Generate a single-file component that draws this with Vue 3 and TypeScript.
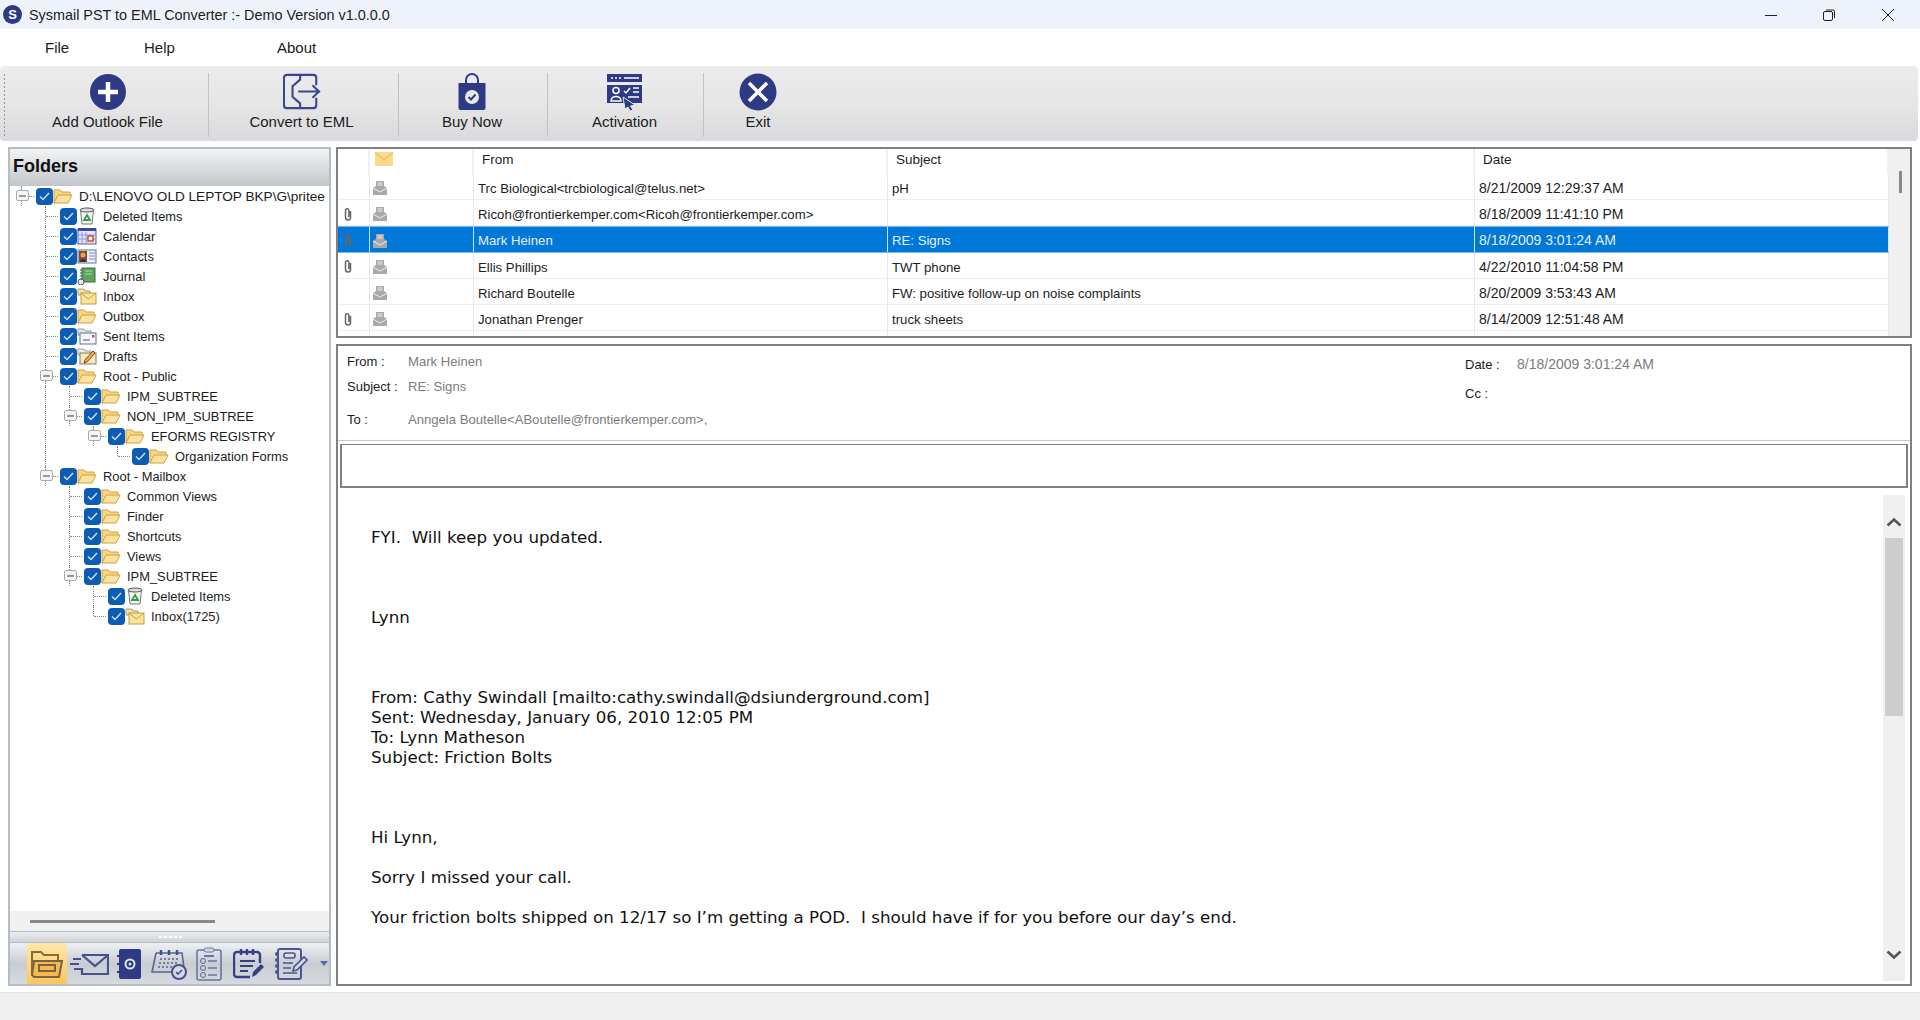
<script setup lang="ts">
interface FolderRow {
  guides: string
  icon: string
  label: string
}

interface MailRow {
  clip: boolean
  from: string
  subject: string
  date: string
  selected?: boolean
}

// guide chars: ' ' blank, '|' pipe, 'T' tee, 'L' elbow, '+' expander
const folders: FolderRow[] = [
  { guides: '+', icon: 'folder', label: 'D:\\LENOVO OLD LEPTOP BKP\\G\\pritee' },
  { guides: ' T', icon: 'trash', label: 'Deleted Items' },
  { guides: ' T', icon: 'calendar', label: 'Calendar' },
  { guides: ' T', icon: 'contacts', label: 'Contacts' },
  { guides: ' T', icon: 'journal', label: 'Journal' },
  { guides: ' T', icon: 'inbox', label: 'Inbox' },
  { guides: ' T', icon: 'folder', label: 'Outbox' },
  { guides: ' T', icon: 'sent', label: 'Sent Items' },
  { guides: ' T', icon: 'drafts', label: 'Drafts' },
  { guides: ' +', icon: 'folder', label: 'Root - Public' },
  { guides: ' |T', icon: 'folder', label: 'IPM_SUBTREE' },
  { guides: ' |+', icon: 'folder', label: 'NON_IPM_SUBTREE' },
  { guides: ' | +', icon: 'folder', label: 'EFORMS REGISTRY' },
  { guides: ' |  L', icon: 'folder', label: 'Organization Forms' },
  { guides: ' +', icon: 'folder', label: 'Root - Mailbox' },
  { guides: '  T', icon: 'folder', label: 'Common Views' },
  { guides: '  T', icon: 'folder', label: 'Finder' },
  { guides: '  T', icon: 'folder', label: 'Shortcuts' },
  { guides: '  T', icon: 'folder', label: 'Views' },
  { guides: '  +', icon: 'folder', label: 'IPM_SUBTREE' },
  { guides: '   T', icon: 'trash', label: 'Deleted Items' },
  { guides: '   L', icon: 'inbox', label: 'Inbox(1725)' },
]

const mails: MailRow[] = [
  { clip: false, from: 'Trc Biological<trcbiological@telus.net>', subject: 'pH', date: '8/21/2009 12:29:37 AM' },
  { clip: true, from: 'Ricoh@frontierkemper.com<Ricoh@frontierkemper.com>', subject: '', date: '8/18/2009 11:41:10 PM' },
  { clip: true, from: 'Mark Heinen', subject: 'RE: Signs', date: '8/18/2009 3:01:24 AM', selected: true },
  { clip: true, from: 'Ellis Phillips', subject: 'TWT phone', date: '4/22/2010 11:04:58 PM' },
  { clip: false, from: 'Richard Boutelle', subject: 'FW: positive follow-up on noise complaints', date: '8/20/2009 3:53:43 AM' },
  { clip: true, from: 'Jonathan Prenger', subject: 'truck sheets', date: '8/14/2009 12:51:48 AM' },
]

const tools = [
  { label: 'Add Outlook File', icon: 'add', cls: 'tool-add' },
  { label: 'Convert to EML', icon: 'convert', cls: 'tool-convert' },
  { label: 'Buy Now', icon: 'buy', cls: 'tool-buy' },
  { label: 'Activation', icon: 'activate', cls: 'tool-activate' },
  { label: 'Exit', icon: 'exit', cls: 'tool-exit' },
]

const navIcons = ['nav-mail', 'nav-contact', 'nav-cal', 'nav-task', 'nav-note', 'nav-journal']

const bodyText = `FYI.  Will keep you updated.



Lynn



From: Cathy Swindall [mailto:cathy.swindall@dsiunderground.com]
Sent: Wednesday, January 06, 2010 12:05 PM
To: Lynn Matheson
Subject: Friction Bolts



Hi Lynn,

Sorry I missed your call.

Your friction bolts shipped on 12/17 so I’m getting a POD.  I should have if for you before our day’s end.`

const guideClass = (ch: string) => {
  if (ch === '|') return 'g-pipe'
  if (ch === 'T') return 'g-tee'
  if (ch === 'L') return 'g-elbow'
  if (ch === '+') return 'g-exp'
  return ''
}
</script>

<template>
  <div class="app">
    <svg class="sprite" width="0" height="0" aria-hidden="true">
      <symbol id="folder" viewBox="0 0 20 18">
        <path d="M1 3 h6 l2 2 h8 v4 H5 L1 16z" fill="#fbd77e" stroke="#cf9f45" />
        <path d="M5 8 h14 l-4 8 H1z" fill="#fde3a0" stroke="#cf9f45" />
      </symbol>
      <symbol id="trash" viewBox="0 0 20 18">
        <path d="M3.500 3 h13 l-1.500 14 h-10z" fill="#f5f5f5" stroke="#777" />
        <ellipse cx="10" cy="3" rx="7" ry="2" fill="#ddd" stroke="#555" />
        <path d="M10 8 l3 5 h-6z" fill="none" stroke="#2f9e44" stroke-width="1.800" />
      </symbol>
      <symbol id="calendar" viewBox="0 0 20 18">
        <rect x="1" y="2" width="18" height="15" fill="#dfe6fa" stroke="#4a5aa8" />
        <rect x="1" y="1" width="18" height="3" fill="#3a4a9c" />
        <path d="M5 5 v11 M9 5 v11 M1 8 h18 M1 12 h18" stroke="#8d9bd8" />
        <rect x="11" y="9" width="5" height="5" fill="#fff" stroke="#d9482b" stroke-width="1.500" />
      </symbol>
      <symbol id="contacts" viewBox="0 0 20 18">
        <rect x="1" y="3" width="18" height="13" fill="#eef1f8" stroke="#6270a8" />
        <rect x="2" y="4" width="8" height="11" fill="#8a4a20" />
        <circle cx="6" cy="8" r="2.500" fill="#e8a060" />
        <path d="M3 15 c0-4 6-4 6 0z" fill="#333" />
        <path d="M12 6 h6 M12 9 h6 M12 12 h6" stroke="#7a8ac0" stroke-width="1.200" />
      </symbol>
      <symbol id="journal" viewBox="0 0 20 18">
        <rect x="5" y="1" width="13" height="14" fill="#5ea35e" stroke="#33703a" />
        <path d="M8 4 h7 M8 7 h7" stroke="#a9d8a9" />
        <path d="M5 3 h-2 M5 6 h-2 M5 9 h-2 M5 12 h-2" stroke="#444" />
        <circle cx="4" cy="15" r="3" fill="#e4e8ef" stroke="#555" />
      </symbol>
      <symbol id="inbox" viewBox="0 0 20 18">
        <path d="M1 2 h6 l1 2 h5 v4 H1z" fill="#f3e1ad" stroke="#b0a176" />
        <rect x="4" y="6" width="15" height="11" fill="#fbe39a" stroke="#bf9d4c" />
        <path d="M4 6 l7.500 6 l7.500-6" fill="none" stroke="#bf9d4c" />
      </symbol>
      <symbol id="sent" viewBox="0 0 20 18">
        <path d="M1 2 h6 l1 2 h6 v4 H1z" fill="#e8e8e8" stroke="#999" />
        <rect x="3" y="6" width="16" height="11" fill="#f6f8fd" stroke="#5f6f9c" />
        <path d="M6 13 h7" stroke="#7a88b4" stroke-width="1.500" />
        <rect x="15" y="8" width="2.500" height="2.500" fill="#d84a3a" />
      </symbol>
      <symbol id="drafts" viewBox="0 0 20 18">
        <path d="M1 2 h6 l1 2 h6 v4 H1z" fill="#eee" stroke="#a3a090" />
        <rect x="3" y="6" width="16" height="11" fill="#fbe9b8" stroke="#7a7a7a" />
        <path d="M7 16 l1-3 l8-9 l2 2 l-8 9z" fill="#d8c23e" stroke="#a52a2a" />
      </symbol>
      <symbol id="envelope" viewBox="0 0 16 15">
        <path d="M4 1 h8 v5 l3 2 v7 H1 V8 l3-2z" fill="#a9a9a9" />
        <path d="M5.500 3 h5 M5.500 5 h5" stroke="#eee" />
        <path d="M1 8 l7 4 l7-4" fill="none" stroke="#eee" />
      </symbol>
      <symbol id="clip" viewBox="0 0 10 14">
        <path d="M7.500 4 v6.500 a2.500 2.500 0 0 1-5 0 V3.500 a1.700 1.700 0 0 1 3.400 0 V10" fill="none" stroke="#666" stroke-width="1.500" />
      </symbol>
      <symbol id="add" viewBox="0 0 38 38">
        <circle cx="19" cy="19" r="18" fill="#2f3a85" />
        <path d="M19 9 v20 M9 19 h20" stroke="#fff" stroke-width="4.500" />
      </symbol>
      <symbol id="convert" viewBox="0 0 40 38">
        <path d="M18 1 H4 a3 3 0 0 0-3 3 V33 a3 3 0 0 0 3 3 H18 V31 L10 24 V13 L18 6z" fill="none" stroke="#3a4690" stroke-width="2.200" stroke-linejoin="round" />
        <path d="M18 1 H32 a3 3 0 0 1 3 3 V12 M35 25 V33 a3 3 0 0 1-3 3 H18" fill="none" stroke="#3a4690" stroke-width="2.200" />
        <path d="M16 18.500 H38 M31 12 L38 18.500 L31 25" fill="none" stroke="#3a4690" stroke-width="2.200" />
      </symbol>
      <symbol id="buy" viewBox="0 0 38 38">
        <path d="M13 12 V7 a6 6 0 0 1 12 0 V12" fill="none" stroke="#2f3a85" stroke-width="2" />
        <path d="M5.500 10 H32.500 V35 a2 2 0 0 1-2 2 H7.500 a2 2 0 0 1-2-2z" fill="#2f3a85" />
        <circle cx="19" cy="24" r="7" fill="#e8e8ea" />
        <path d="M15.500 24 L18 26.500 L22.500 21.500" fill="none" stroke="#2f3a85" stroke-width="2" />
      </symbol>
      <symbol id="activate" viewBox="0 0 38 38">
        <rect x="1" y="1" width="35" height="8" fill="#2f3a85" />
        <path d="M5 5 h2 M9 5 h2 M13 5 h2 M18 5 h15" stroke="#fff" stroke-width="1.500" />
        <rect x="1" y="12" width="35" height="18" fill="#2f3a85" />
        <circle cx="10" cy="17.500" r="3" fill="none" stroke="#fff" stroke-width="1.500" />
        <path d="M5 28 c0-6 10-6 10 0z" fill="none" stroke="#fff" stroke-width="1.500" />
        <path d="M18 18 l2 2 l4-5 M27 15 h6 M27 19 h6 M22 24 h11" fill="none" stroke="#fff" stroke-width="1.500" />
        <path d="M17 24 L29 32 L24.500 33 L27 37 L24 38 L22 34 L19 36z" fill="#2f3a85" stroke="#e8e8ea" />
      </symbol>
      <symbol id="exit" viewBox="0 0 38 38">
        <circle cx="19" cy="19" r="18.500" fill="#2f3a85" />
        <path d="M10 10 L28 28 M28 10 L10 28" stroke="#fff" stroke-width="3.500" />
      </symbol>
      <symbol id="nav-folder" viewBox="0 0 34 30">
        <path d="M2 26 V3 h9 l3 3 h14 v6" fill="none" stroke="#8a6a3c" stroke-width="2" />
        <path d="M2 26 L4 12 H32 L29 28 H4z" fill="#f6b94f" stroke="#7a6440" stroke-width="2" />
        <rect x="9" y="16" width="16" height="6" fill="none" stroke="#7a6440" stroke-width="2" />
      </symbol>
      <symbol id="nav-mail" viewBox="0 0 40 24">
        <path d="M13 3 H39 V22 H13 V16 M13 3 L26 14 L39 3" fill="none" stroke="#44528e" stroke-width="2.200" />
        <path d="M4 7 H12 M1 12 H10 M5 17 H12" stroke="#44528e" stroke-width="2.200" />
      </symbol>
      <symbol id="nav-contact" viewBox="0 0 24 32">
        <rect x="2" y="1" width="22" height="30" rx="2" fill="#2f3a85" />
        <path d="M0 8 h3 M0 16 h3 M0 24 h3" stroke="#2f3a85" stroke-width="2" />
        <circle cx="13" cy="16" r="4.500" fill="none" stroke="#dfe3ee" stroke-width="2" />
        <circle cx="13" cy="16" r="1.500" fill="#dfe3ee" />
      </symbol>
      <symbol id="nav-cal" viewBox="0 0 36 32">
        <path d="M5 5 H31 L33 20 M5 5 L1 24 H22" fill="none" stroke="#5a668f" stroke-width="1.600" />
        <path d="M10 2 v5 M18 2 v5 M26 2 v5" stroke="#44528e" stroke-width="2.500" />
        <path d="M9 11 h19 M8 15 h19 M7 19 h14" stroke="#5a668f" stroke-width="1.600" stroke-dasharray="2 2" />
        <circle cx="28" cy="24" r="7" fill="#d5d9e0" stroke="#44528e" stroke-width="2" />
        <path d="M25 24 l2 2 l4-4" fill="none" stroke="#44528e" stroke-width="1.600" />
      </symbol>
      <symbol id="nav-task" viewBox="0 0 26 34">
        <rect x="1" y="3" width="24" height="30" rx="2" fill="none" stroke="#6a75a2" stroke-width="1.600" />
        <rect x="8" y="1" width="10" height="4" rx="2" fill="#d5d9e0" stroke="#6a75a2" />
        <path d="M8 9 h10" stroke="#6a75a2" stroke-width="2" />
        <circle cx="7" cy="14" r="2.500" fill="none" stroke="#5a668f" />
        <circle cx="7" cy="21" r="2.500" fill="none" stroke="#5a668f" />
        <circle cx="7" cy="28" r="2.500" fill="none" stroke="#5a668f" />
        <path d="M12 14 h9 M12 21 h9 M12 28 h9" stroke="#6a75a2" stroke-width="1.600" />
      </symbol>
      <symbol id="nav-note" viewBox="0 0 32 32">
        <path d="M17 29 H4 a3 3 0 0 1-3-3 V7 a3 3 0 0 1 3-3 H24 a3 3 0 0 1 3 3 V15" fill="none" stroke="#34408a" stroke-width="2.400" />
        <path d="M8 1 v6 M14 1 v6 M20 1 v6" stroke="#34408a" stroke-width="2.400" />
        <path d="M7 13 h15 M7 18 h13 M7 23 h8" stroke="#34408a" stroke-width="2.200" />
        <path d="M19 29 l1-5 l8-8 l3 3 l-8 8z" fill="#34408a" />
      </symbol>
      <symbol id="nav-journal" viewBox="0 0 34 32">
        <rect x="4" y="1" width="23" height="30" rx="2" fill="none" stroke="#4a5790" stroke-width="2" />
        <circle cx="3" cy="6" r="2" fill="#4a5790" />
        <circle cx="3" cy="12" r="2" fill="#4a5790" />
        <circle cx="3" cy="18" r="2" fill="#4a5790" />
        <circle cx="3" cy="24" r="2" fill="#4a5790" />
        <rect x="10" y="5" width="11" height="5" rx="2" fill="none" stroke="#4a5790" stroke-width="1.600" />
        <path d="M9 15 h10 M9 20 h8 M9 25 h14" stroke="#4a5790" stroke-width="1.600" />
        <path d="M19 23 l1-4 l10-10 l3 3 l-10 10z" fill="#d5d9e0" stroke="#4a5790" stroke-width="1.600" />
      </symbol>
    </svg>

    <header class="titlebar">
      <span class="logo">S</span>
      <span class="title">Sysmail PST to EML Converter :- Demo Version v1.0.0.0</span>
      <div class="win-controls">
        <span class="win-btn"><svg width="12" height="12" viewBox="0 0 12 12"><path d="M0 6.500 H12" stroke="#222" stroke-width="1" /></svg></span>
        <span class="win-btn"><svg width="12" height="12" viewBox="0 0 12 12"><rect x="0.500" y="2.500" width="9" height="9" rx="1.500" fill="none" stroke="#222" /><path d="M3 1 H10 a1.500 1.500 0 0 1 1.500 1.500 V9" fill="none" stroke="#222" /></svg></span>
        <span class="win-btn"><svg width="12" height="12" viewBox="0 0 12 12"><path d="M0 0 L12 12 M12 0 L0 12" stroke="#222" stroke-width="1" /></svg></span>
      </div>
    </header>

    <nav class="menubar">
      <span class="menu-file">File</span>
      <span class="menu-help">Help</span>
      <span>About</span>
    </nav>

    <div class="toolbar">
      <span class="grip"></span>
      <button v-for="tool in tools" :key="tool.label" :class="['tool', tool.cls]">
        <svg class="tool-icon"><use :href="`#${tool.icon}`" /></svg>
        <span>{{ tool.label }}</span>
      </button>
    </div>

    <main class="workspace">
      <aside class="folders">
        <h2 class="folders-head">Folders</h2>
        <div class="tree">
          <div v-for="(row, i) in folders" :key="i" class="tree-row">
            <span v-for="(ch, j) in row.guides.split('')" :key="j" :class="['guide', guideClass(ch)]">
              <i v-if="ch === '+'" class="expander"></i>
            </span>
            <span class="check">
              <svg width="11" height="9" viewBox="0 0 11 9"><path d="M1 4.500 L4 7.500 L10 1" fill="none" stroke="#cfe0f5" stroke-width="1.400" /></svg>
            </span>
            <svg class="tree-icon"><use :href="`#${row.icon}`" /></svg>
            <span class="tree-label">{{ row.label }}</span>
          </div>
        </div>
        <div class="h-scroll"><span class="h-thumb"></span></div>
        <div class="splitter"><span class="dots"></span></div>
        <div class="navbar">
          <span class="nav-active"><svg class="nav-icon nav-folder"><use href="#nav-folder" /></svg></span>
          <svg v-for="icon in navIcons" :key="icon" :class="['nav-icon', icon]"><use :href="`#${icon}`" /></svg>
          <span class="nav-more"></span>
        </div>
      </aside>

      <section class="content">
        <div class="mail-list">
          <div class="mail-table">
            <div class="mail-head">
              <span></span>
              <span class="cell-env"><svg class="head-env" viewBox="0 0 18 14"><rect width="18" height="14" fill="#fbdb8a" /><path d="M0 0 L9 8 L18 0" fill="none" stroke="#e8b050" /></svg></span>
              <span class="head-text">From</span>
              <span class="head-text">Subject</span>
              <span class="head-text">Date</span>
            </div>
            <div v-for="mail in mails" :key="mail.date" :class="['mail-row', { selected: mail.selected }]">
              <span class="cell-clip"><svg v-if="mail.clip" class="clip"><use href="#clip" /></svg></span>
              <span class="cell-env"><svg class="env"><use href="#envelope" /></svg></span>
              <span class="cell-text">{{ mail.from }}</span>
              <span class="cell-text">{{ mail.subject }}</span>
              <span class="cell-text cell-date">{{ mail.date }}</span>
            </div>
            <div class="mail-row stub"><span></span><span></span><span></span><span></span><span></span></div>
          </div>
          <div class="list-scroll"><span class="list-thumb"></span></div>
        </div>

        <div class="preview">
          <div class="meta">
            <div class="meta-left">
              <div class="meta-line line-from"><span class="meta-key">From :</span><span class="meta-val">Mark Heinen</span></div>
              <div class="meta-line line-subject"><span class="meta-key">Subject :</span><span class="meta-val">RE: Signs</span></div>
              <div class="meta-line line-to"><span class="meta-key">To :</span><span class="meta-val">Anngela Boutelle&lt;ABoutelle@frontierkemper.com&gt;,</span></div>
            </div>
            <div class="meta-right">
              <div class="meta-line line-date"><span class="meta-key key-short">Date :</span><span class="meta-val val-date">8/18/2009 3:01:24 AM</span></div>
              <div class="meta-line line-cc"><span class="meta-key key-short">Cc :</span></div>
            </div>
          </div>
          <div class="attach-box"></div>
          <div class="body">
            <pre class="body-text">{{ bodyText }}</pre>
            <div class="body-scroll">
              <span class="scroll-btn btn-up"><svg width="16" height="10" viewBox="0 0 16 10"><path d="M1.500 8.500 L8 2.500 L14.500 8.500" fill="none" stroke="#555" stroke-width="2.600" /></svg></span>
              <span class="body-thumb"></span>
              <span class="scroll-fill"></span>
              <span class="scroll-btn btn-down"><svg width="16" height="10" viewBox="0 0 16 10"><path d="M1.500 1.500 L8 7.500 L14.500 1.500" fill="none" stroke="#555" stroke-width="2.600" /></svg></span>
            </div>
          </div>
        </div>
      </section>
    </main>

    <footer class="statusbar"></footer>
  </div>
</template>

<style scoped>
.app {
  display: flex;
  flex-direction: column;
  height: 1020px;
  overflow: hidden;
  background: #fff;
  color: #1c1c1c;
  font-family: "Liberation Sans", Arial, sans-serif;
  font-size: 14px;
}

.sprite {
  position: absolute;
}

.titlebar {
  display: flex;
  align-items: center;
  height: 29px;
  flex: none;
  padding-left: 3px;
  background: #eef3fb;
}

.logo {
  display: flex;
  align-items: center;
  justify-content: center;
  width: 19px;
  height: 19px;
  border-radius: 50%;
  background: #2f3a85;
  color: #fff;
  font-size: 13px;
  font-weight: 700;
}

.title {
  margin-left: 7px;
  font-size: 14.400px;
}

.win-controls {
  display: flex;
  margin-left: auto;
  padding-right: 3px;
}

.win-btn {
  display: flex;
  align-items: center;
  justify-content: center;
  width: 58.500px;
  height: 29px;
}

.menubar {
  display: flex;
  align-items: center;
  flex: none;
  height: 37px;
  padding: 0 0 1px 45px;
  box-sizing: border-box;
  font-size: 15px;
}

.menu-file {
  width: 99px;
}

.menu-help {
  width: 133px;
}

.toolbar {
  display: flex;
  flex: none;
  align-items: stretch;
  height: 75px;
  width: 1918px;
  padding: 7px 0 4px;
  box-sizing: border-box;
  border-radius: 4px;
  background: linear-gradient(#ececec, #e6e6e6 50%, #dadade);
}

.grip {
  width: 8px;
  flex: none;
  margin-left: 3px;
  background: radial-gradient(circle, #9a9a9a 0.800px, transparent 1px) 0 0 / 3px 4px repeat-y;
}

.tool {
  display: flex;
  flex-direction: column;
  align-items: center;
  gap: 2px;
  flex: none;
  padding: 0 4px 0 0;
  border: none;
  border-right: 1px solid #c2c2c2;
  background: none;
  color: #1c1c1c;
  font: inherit;
  font-size: 15px;
}

.tool-add { width: 198px; }
.tool-convert { width: 190px; }
.tool-buy { width: 149px; padding-right: 2px; }
.tool-activate { width: 156px; padding-right: 2px; }
.tool-exit { width: 108px; border-right: none; padding-right: 0; }

.tool-icon {
  width: 38px;
  height: 38px;
}

.workspace {
  display: flex;
  flex: 1;
  min-height: 0;
  gap: 5px;
  padding: 6px 0 0 8px;
}

.folders {
  display: flex;
  flex-direction: column;
  flex: none;
  width: 323px;
  box-sizing: border-box;
  border: 2px solid #b4bcc8;
  background: #fff;
}

.folders-head {
  flex: none;
  height: 37px;
  margin: 0;
  padding-left: 3px;
  background: linear-gradient(#f4f4f4, #c2c5ca);
  font-size: 18px;
  font-weight: 700;
  line-height: 35px;
  color: #111;
}

.tree {
  flex: 1;
  min-height: 0;
  overflow: hidden;
}

.tree-row {
  display: flex;
  align-items: center;
  height: 20px;
}

.guide {
  position: relative;
  flex: none;
  width: 24px;
  height: 20px;
}

.g-pipe::before,
.g-tee::before,
.g-elbow::before,
.g-exp::before {
  content: '';
  position: absolute;
  left: 11px;
  top: 0;
  bottom: 0;
  border-left: 1px dotted #888;
}

.g-elbow::before {
  bottom: 10px;
}

.g-tee::after,
.g-elbow::after,
.g-exp::after {
  content: '';
  position: absolute;
  left: 12px;
  right: 0;
  top: 10px;
  border-top: 1px dotted #888;
}

.expander {
  position: absolute;
  z-index: 1;
  left: 6px;
  top: 4px;
  width: 13px;
  height: 11px;
  box-sizing: border-box;
  border: 1px solid #aaa;
  border-radius: 2px;
  background: linear-gradient(#999, #999) center / 7px 2px no-repeat, #f4f4f4;
}

.check {
  display: flex;
  align-items: center;
  justify-content: center;
  flex: none;
  width: 17px;
  height: 17px;
  margin-left: 2px;
  border-radius: 4px;
  background: #0c5cb3;
}

.tree-icon {
  flex: none;
  width: 20px;
  height: 18px;
}

.tree-label {
  margin-left: 6px;
  white-space: nowrap;
  font-size: 12.900px;
}

.tree-row:first-child .tree-label {
  font-size: 13.600px;
}

.h-scroll {
  display: flex;
  align-items: center;
  flex: none;
  height: 20px;
  padding-left: 20px;
  background: #f0f0f0;
}

.h-thumb {
  width: 185px;
  height: 3px;
  background: #888;
}

.splitter {
  display: flex;
  align-items: center;
  justify-content: center;
  flex: none;
  height: 10px;
  border-top: 1px solid #b4bcc8;
  border-bottom: 1px solid #b4bcc8;
  background: linear-gradient(#eceef0, #cfd2d6);
}

.dots {
  width: 24px;
  height: 4px;
  background: radial-gradient(circle, #fff 1.200px, transparent 1.500px) 0 0 / 5px 4px repeat-x;
}

.navbar {
  display: flex;
  align-items: center;
  flex: none;
  height: 41px;
  padding-left: 17px;
  background: linear-gradient(#eef0f3, #c9cdd2 50%, #d6d9dd);
}

.nav-active {
  display: flex;
  align-items: center;
  justify-content: center;
  flex: none;
  width: 40px;
  height: 41px;
  background: linear-gradient(#ffe7a8, #ffc45c);
}

.nav-icon {
  flex: none;
  height: 34px;
}

.nav-folder { width: 34px; height: 30px; }
.nav-mail { width: 40px; height: 24px; margin-left: 2px; }
.nav-contact { width: 24px; margin-left: 8px; }
.nav-cal { width: 36px; margin-left: 10px; }
.nav-task { width: 26px; margin-left: 9px; }
.nav-note { width: 32px; margin-left: 11px; }
.nav-journal { width: 34px; margin-left: 9px; }

.nav-more {
  width: 0;
  height: 0;
  margin-left: 12px;
  border-left: 4px solid transparent;
  border-right: 4px solid transparent;
  border-top: 5px solid #4a6fb0;
}

.content {
  display: flex;
  flex-direction: column;
  flex: none;
  width: 1576px;
  gap: 6px;
}

.mail-list {
  display: flex;
  flex: none;
  height: 191px;
  box-sizing: border-box;
  border: 2px solid #808080;
  overflow: hidden;
}

.mail-table {
  flex: 1;
  min-width: 0;
}

.mail-head,
.mail-row {
  display: grid;
  grid-template-columns: 32px 104px 414px 587px 414px;
}

.mail-head {
  height: 25px;
  font-size: 13.500px;
  line-height: 22px;
}

.mail-head > span {
  border-right: 2px solid #f0f0f0;
  box-sizing: border-box;
}

.head-text {
  padding-left: 8px;
}

.head-env {
  display: block;
  width: 18px;
  height: 14px;
  margin: 3px 0 0 5px;
}

.mail-row {
  height: 26.200px;
  box-sizing: border-box;
  border-bottom: 1px solid #eeeeee;
  font-size: 13.200px;
  line-height: 29px;
}

.mail-row > span {
  border-right: 1px solid #e8e8e8;
  box-sizing: border-box;
}

.cell-text {
  padding-left: 4px;
  white-space: nowrap;
  overflow: hidden;
}

.cell-date {
  font-size: 14px;
}

.cell-clip,
.mail-row .cell-env {
  display: flex;
  align-items: center;
  padding-top: 2px;
}

.clip {
  width: 10px;
  height: 14px;
  margin-left: 5px;
}

.env {
  width: 16px;
  height: 15px;
  margin-left: 2px;
}

.selected {
  background: #0078d7;
  color: #e4effa;
  border-bottom-color: #7fb8ea;
  border-top: 1px solid #7fb8ea;
}

.selected > span {
  border-right-color: #cfe3f6;
}

.selected .cell-text {
  line-height: 27px;
}

.stub {
  border-bottom: none;
}

.list-scroll {
  flex: none;
  width: 21px;
  padding-top: 22px;
  background: #f0f0f0;
}

.list-thumb {
  display: block;
  width: 3px;
  height: 22px;
  margin-left: 10px;
  background: #8a8a8a;
}

.preview {
  display: flex;
  flex-direction: column;
  flex: 1;
  min-height: 0;
  box-sizing: border-box;
  border: 2px solid #808080;
}

.meta {
  display: flex;
  justify-content: space-between;
  flex: none;
  height: 95px;
  box-sizing: border-box;
  border-bottom: 1px solid #b4cce4;
}

.meta-left {
  padding-left: 9px;
}

.meta-right {
  width: 445px;
}

.meta-line {
  display: flex;
  align-items: center;
  height: 20px;
  font-size: 13px;
}

.line-from { margin-top: 5px; }
.line-subject { margin-top: 5px; }
.line-to { margin-top: 13px; }
.line-date { margin-top: 8px; }
.line-cc { margin-top: 9px; }

.meta-key {
  width: 61px;
}

.key-short {
  width: 52px;
}

.meta-val {
  color: #7c7c7c;
  font-size: 13.100px;
}

.val-date {
  font-size: 14px;
}

.attach-box {
  flex: none;
  height: 44px;
  margin: 3px 2px 0;
  box-sizing: border-box;
  border: 2px solid #808080;
  border-top-width: 1px;
}

.body {
  display: flex;
  flex: 1;
  min-height: 0;
  padding: 7px 5px 3px 0;
}

.body-text {
  flex: 1;
  margin: 0;
  padding: 32px 0 0 33px;
  font-family: "DejaVu Sans", Verdana, sans-serif;
  font-size: 16.700px;
  line-height: 20px;
  color: #111;
  overflow: hidden;
}

.body-scroll {
  display: flex;
  flex-direction: column;
  align-items: center;
  flex: none;
  width: 22px;
  background: #f0f0f0;
}

.scroll-btn {
  display: flex;
  align-items: center;
  justify-content: center;
  flex: none;
  height: 43px;
  box-sizing: border-box;
}

.btn-up {
  padding-top: 10px;
}

.btn-down {
  padding-bottom: 10px;
}

.body-thumb {
  flex: none;
  width: 18px;
  height: 178px;
  background: #cdcdcd;
}

.scroll-fill {
  flex: 1;
}

.statusbar {
  flex: none;
  height: 27px;
  margin-top: 6px;
  border-top: 1px solid #e4e4e4;
  background: #f0f0f0;
}
</style>

<style>
html,
body {
  margin: 0;
  background: #fff;
}
</style>
